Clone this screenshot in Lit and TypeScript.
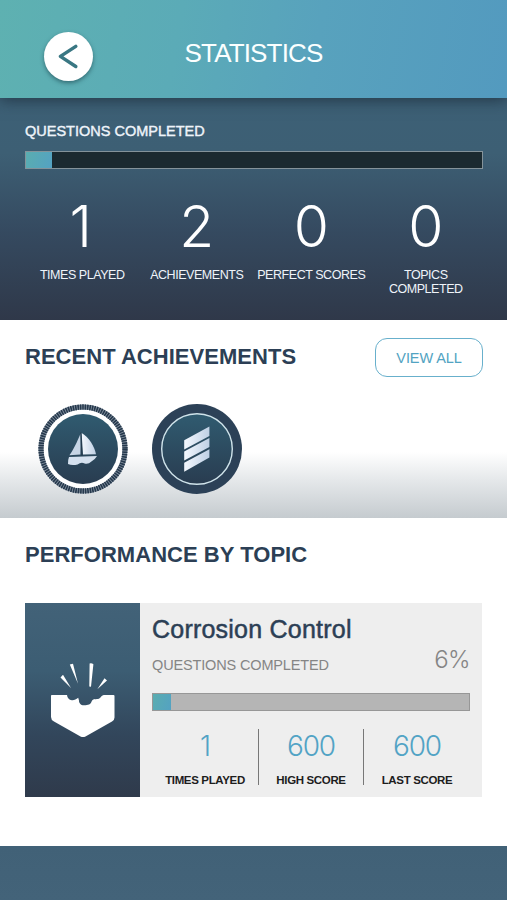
import { LitElement, html, css, svg } from "lit";
import { customElement, property } from "lit/decorators.js";

const summary = [
  { value: "1", label: "TIMES PLAYED" },
  { value: "2", label: "ACHIEVEMENTS" },
  { value: "0", label: "PERFECT SCORES" },
  { value: "0", label: "TOPICS COMPLETED" },
];

const scores = [
  { value: "1", label: "TIMES PLAYED" },
  { value: "600", label: "HIGH SCORE" },
  { value: "600", label: "LAST SCORE" },
];

const badgeDefs = svg`
  <defs>
    <linearGradient id="disc" x1="0" y1="0" x2="0" y2="1">
      <stop offset="0" stop-color="#305b70" />
      <stop offset="1" stop-color="#293c50" />
    </linearGradient>
    <linearGradient id="shine" x1="0" y1="0" x2="1" y2="0">
      <stop offset="0" stop-color="#f4f8fe" />
      <stop offset="1" stop-color="#bfd0e4" />
    </linearGradient>
  </defs>`;

@customElement("progress-bar")
class ProgressBar extends LitElement {
  @property({ type: Number }) value = 0;

  static styles = css`
    :host {
      display: block;
      box-sizing: border-box;
      height: 18px;
      border: 1px solid var(--bar-border);
      background: var(--bar-track);
    }
    .fill {
      height: 100%;
      background: linear-gradient(110deg, #5aadb0, #54a2c2);
    }
  `;

  render() {
    return html`<div class="fill" style="width:${this.value}%"></div>`;
  }
}

@customElement("app-root")
class AppRoot extends LitElement {
  static styles = css`
    :host {
      display: flex;
      flex-direction: column;
      box-sizing: border-box;
      height: 900px;
      background: #fff;
      font-family: "Liberation Sans", Arial, sans-serif;
      color: #2c3f55;
      overflow: hidden;
    }
    h1, h2, h3, p { margin: 0; }
    .header {
      position: relative;
      z-index: 1;
      flex: none;
      height: 98px;
      display: grid;
      grid-template-columns: 93px 1fr 93px;
      box-sizing: border-box;
      padding-top: 32px;
      background: linear-gradient(100deg, #5eb1b1 0%, #5babb7 35%, #58a2bd 62%, #539abf 100%);
      box-shadow: 0 2px 14px rgba(20, 32, 44, 0.65);
    }
    .back {
      justify-self: end;
      width: 49px;
      height: 49px;
      padding: 0;
      border: 0;
      border-radius: 50%;
      background: #fff;
      box-shadow: 0 2px 4px rgba(25, 65, 75, 0.6);
    }
    .back svg { display: block; }
    .title {
      text-align: center;
      font-weight: 400;
      font-size: 26px;
      line-height: 30px;
      padding-top: 6px;
      letter-spacing: -0.85px;
      color: #fbffff;
    }
    .summary {
      flex: none;
      height: 222px;
      box-sizing: border-box;
      padding: 25px 24px 0 25px;
      background: linear-gradient(#3d6076 0%, #3d5f74 25%, #354a60 60%, #2f3849 100%);
      color: #eff4fa;
    }
    .caption {
      font-size: 14.5px;
      line-height: 17px;
      -webkit-text-stroke: 0.4px currentColor;
    }
    .summary progress-bar {
      --bar-border: #84939a;
      --bar-track: #1b2a30;
      margin-top: 11px;
    }
    .stats {
      display: grid;
      grid-template-columns: repeat(4, 1fr);
      margin-top: 29px;
      text-align: center;
    }
    .big {
      font: 300 57px/58px Inter, sans-serif;
      color: #fff;
    }
    .stat:first-child .big { padding-right: 3px; }
    .label {
      width: 110px;
      margin: 13px auto 0;
      font-size: 12.5px;
      line-height: 13.5px;
      letter-spacing: -0.45px;
    }
    .stat:last-child .label { width: 80px; }
    .achievements {
      flex: none;
      height: 198px;
      box-sizing: border-box;
      padding: 18px 24px 0 25px;
      background: linear-gradient(#fff 0, #fff 132px, #e5e8ea 160px, #c5cbcf 198px);
    }
    .bar {
      display: flex;
      justify-content: space-between;
      align-items: center;
    }
    .heading {
      font-size: 22px;
      line-height: 26px;
      font-weight: 700;
      letter-spacing: 0.03px;
    }
    .bar .heading { padding-bottom: 2px; }
    .view {
      box-sizing: border-box;
      width: 108px;
      height: 39px;
      border: 1.5px solid #68b0cc;
      border-radius: 12px;
      background: none;
      padding: 0;
      font: 14.5px "Liberation Sans", Arial, sans-serif;
      letter-spacing: -0.1px;
      color: #52a3c2;
    }
    .badges {
      display: flex;
      gap: 24px;
      padding: 27px 0 0 12.5px;
    }
    .badges svg { display: block; }
    .topics {
      flex: 1;
      padding: 24px 25px 0 25px;
    }
    .card {
      display: grid;
      grid-template-columns: 115px 1fr;
      height: 194px;
      margin-top: 35px;
      background: #eee;
    }
    .art {
      display: grid;
      background: linear-gradient(#426278 0%, #3c5d73 35%, #32465b 68%, #2f3a4b 100%);
    }
    .detail {
      padding: 12px 12px 0 12px;
    }
    .name {
      font-weight: 400;
      font-size: 25px;
      line-height: 28px;
      letter-spacing: 0.22px;
      -webkit-text-stroke: 0.5px currentColor;
    }
    .meta {
      display: flex;
      justify-content: space-between;
      height: 29px;
      color: #858585;
    }
    .meta .text {
      font-size: 14.5px;
      line-height: 17px;
      letter-spacing: -0.15px;
      padding-top: 14px;
    }
    .meta .percent {
      font: 300 24px/28px Inter, sans-serif;
      letter-spacing: -0.6px;
      padding-top: 3px;
    }
    .detail progress-bar {
      --bar-border: #979797;
      --bar-track: #b5b5b5;
      margin-top: 21px;
    }
    .scores {
      display: grid;
      grid-template-columns: 107px 105px 1fr;
      margin-top: 18px;
      text-align: center;
    }
    .score {
      height: 56px;
      box-sizing: border-box;
      border-right: 1px solid #777;
    }
    .score:last-child { border: 0; }
    .num {
      font: 300 28px/34px Inter, sans-serif;
      letter-spacing: -1.2px;
      color: #52a3c5;
    }
    .tag {
      font-weight: 700;
      font-size: 11.5px;
      line-height: 14px;
      letter-spacing: -0.35px;
      color: #1d1d1d;
      margin-top: 10px;
      white-space: nowrap;
    }
    .footer {
      flex: none;
      height: 54px;
      background: linear-gradient(#416177, #436379);
    }
  `;

  sailBadge() {
    return html`<svg width="90" height="90" viewBox="0 0 90 90">
      ${badgeDefs}
      <circle cx="45" cy="45" r="44.5" fill="#fff" />
      <circle cx="45" cy="45" r="42" fill="none" stroke="#8794a2" stroke-width="5" />
      <circle cx="45" cy="45" r="42" fill="none" stroke="#25384c" stroke-width="5.4" stroke-dasharray="1.6 0.8" />
      <circle cx="45" cy="45" r="35" fill="url(#disc)" />
      <path d="M42.6 29.5C38.5 39 36 45 31.4 51.2L42.4 50.4Z" fill="#c7d5e5" />
      <path d="M43.6 29C50.5 33 56.5 42 58 50.3L45 50.6Z" fill="url(#shine)" />
      <path d="M42.8 28.5L44 52" stroke="#23384c" stroke-width="1" />
      <path d="M31 53L59 52Q57 55.8 53.4 57.4Q50.4 60.4 46.6 59.4Q43.2 57.6 39.6 60.4Q34 61.8 30 60Q29.8 56 31 53Z" fill="#d5e1ef" />
    </svg>`;
  }

  stripeBadge() {
    return html`<svg width="90" height="90" viewBox="0 0 90 90">
      ${badgeDefs}
      <circle cx="45" cy="45" r="45" fill="#2c4157" />
      <circle cx="45" cy="45" r="35.3" fill="url(#disc)" stroke="#cfe3ea" stroke-width="1.4" />
      <path d="M32.2 36.2L57.4 22.4V32L32.2 45.6Z M32.2 47.6L57.4 34V43L32.2 56.6Z M32.2 58.8L57.4 45.2V53.6L32.2 67.8Z" fill="url(#shine)" />
    </svg>`;
  }

  corrosionArt() {
    return html`<svg width="115" height="194" viewBox="0 0 115 194" fill="#fff">
      <path d="M26.8 92H42C42.3 95 44 96.8 46.8 97.2C49.3 97.4 51 96.4 53.2 94.8L54 97.5C53.8 100 56 102.6 59.3 102.3C63 102.2 65.8 101.3 66.7 98.2C67.6 95.8 70 96.4 73 96C75.6 95.7 76 92.4 79 92H88.5Q89.5 92 89.5 93V114.5Q89.5 117 87 118.6L60.5 133.4Q58 134.8 55.5 133.4L29 118.6Q26 117 26 114V92.8Q26 92 26.8 92Z" />
      <path d="M35.5 74.6L38 71.8L46 85Z M44.8 61.5L48 60.8L53 80.8Z M64.6 60.4Q66.8 59.8 68.4 61.2L66 83.8L64.3 83.6Z M79.5 75.2L82 77.5L72.3 86.2Z" />
    </svg>`;
  }

  render() {
    return html`
      <header class="header">
        <button class="back" aria-label="Back">
          <svg width="49" height="49" viewBox="0 0 49 49" fill="none" stroke="#397783" stroke-width="3.5" stroke-linecap="round" stroke-linejoin="round">
            <path d="M31.8 14.4L16.4 24.4L31.8 34.5" />
          </svg>
        </button>
        <h1 class="title">STATISTICS</h1>
      </header>
      <section class="summary">
        <p class="caption">QUESTIONS COMPLETED</p>
        <progress-bar .value=${5.6}></progress-bar>
        <div class="stats">
          ${summary.map((s) => html`<div class="stat"><div class="big">${s.value}</div><div class="label">${s.label}</div></div>`)}
        </div>
      </section>
      <section class="achievements">
        <div class="bar">
          <h2 class="heading">RECENT ACHIEVEMENTS</h2>
          <button class="view">VIEW ALL</button>
        </div>
        <div class="badges">${this.sailBadge()}${this.stripeBadge()}</div>
      </section>
      <section class="topics">
        <h2 class="heading">PERFORMANCE BY TOPIC</h2>
        <div class="card">
          <div class="art">${this.corrosionArt()}</div>
          <div class="detail">
            <h3 class="name">Corrosion Control</h3>
            <div class="meta"><span class="text">QUESTIONS COMPLETED</span><span class="percent">6%</span></div>
            <progress-bar .value=${5.7}></progress-bar>
            <div class="scores">
              ${scores.map((s) => html`<div class="score"><div class="num">${s.value}</div><div class="tag">${s.label}</div></div>`)}
            </div>
          </div>
        </div>
      </section>
      <footer class="footer"></footer>
    `;
  }
}
